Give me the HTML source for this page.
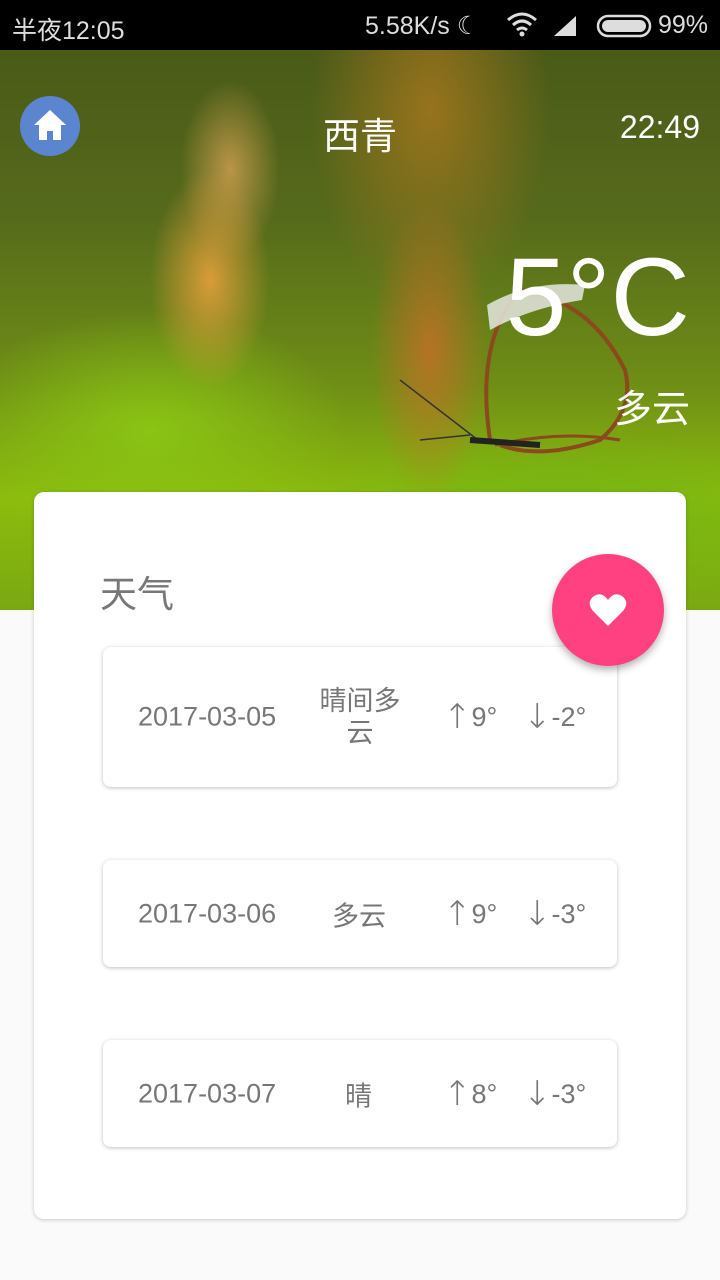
<!DOCTYPE html><html><head><meta charset="utf-8"><style>
*{margin:0;padding:0;box-sizing:border-box}
body{width:720px;height:1280px;background:#fafafa;position:relative;overflow:hidden;font-family:"Liberation Sans","Noto Sans CJK SC",sans-serif}
.sb{position:absolute;top:0;left:0;width:720px;height:50px;background:#000;color:#ddd;font-size:25px}
.bg{position:absolute;top:50px;left:0;width:720px;height:560px;overflow:hidden;
background:
radial-gradient(ellipse 60px 110px at 210px 230px,rgba(230,160,60,.9),rgba(200,130,40,0) 100%),
radial-gradient(ellipse 50px 90px at 230px 120px,rgba(230,170,90,.7),rgba(0,0,0,0)),
radial-gradient(ellipse 60px 150px at 430px 300px,rgba(200,110,40,.8),rgba(0,0,0,0)),
radial-gradient(ellipse 200px 120px at 150px 380px,rgba(140,200,20,.9),rgba(0,0,0,0)),
radial-gradient(ellipse 260px 90px at 560px 470px,rgba(110,180,20,.9),rgba(0,0,0,0)),
radial-gradient(ellipse 120px 200px at 430px 60px,rgba(170,120,30,.8),rgba(0,0,0,0)),
linear-gradient(180deg,#4a5a18 0%,#566a1c 30%,#6f8e16 60%,#8cbc0e 80%,#7aa812 100%);}
.card{position:absolute;left:34px;top:492px;width:652px;height:727px;background:#fff;border-radius:10px;box-shadow:0 1px 4px rgba(0,0,0,.2)}
.item{position:absolute;left:103px;width:514px;background:#fff;border-radius:8px;box-shadow:0 1px 4px rgba(0,0,0,.25);color:#777;font-size:27px}
.item span{position:absolute;top:50%;transform:translateY(-50%);white-space:nowrap}
.ar{font-size:34px;font-family:"DejaVu Sans",sans-serif;font-weight:200;vertical-align:-2px}
.fab{position:absolute;left:552px;top:554px;width:112px;height:112px;border-radius:50%;background:#ff4081;box-shadow:0 4px 8px rgba(0,0,0,.3)}
</style></head><body>
<div class="bg">
<svg width="720" height="560" style="position:absolute;left:0;top:0">
<g fill="none" stroke="#8a4a1c" stroke-width="4">
<path d="M490 390 Q475 290 520 240 Q590 250 625 320 Q635 360 600 390 Q540 410 500 395"/>
<path d="M495 395 Q560 380 620 390" stroke-width="3"/>
</g>
<path d="M487 255 Q530 230 585 235 L582 250 Q530 258 490 280Z" fill="#eee" opacity=".8"/>
<path d="M400 330 L478 390 M420 390 L470 385" stroke="#333" stroke-width="1.5"/>
<path d="M470 390 L540 395" stroke="#222" stroke-width="6"/>
</svg>
</div>
<div class="sb"><span style="position:absolute;left:12px;top:11px">半夜12:05</span>
<span style="position:absolute;left:365px;top:11px">5.58K/s ☾</span>
<svg style="position:absolute;left:506px;top:12px" width="150" height="26"><path d="M2 8 Q16 -4 30 8 M7 13 Q16 5 25 13 M11 18 Q16 14 21 18" stroke="#ddd" stroke-width="3" fill="none"/><circle cx="16" cy="22" r="2.5" fill="#ddd"/><path d="M48 24 L70 24 L70 4Z" fill="#ddd"/><rect x="92" y="4" width="52" height="20" rx="10" fill="none" stroke="#ddd" stroke-width="2.5"/><rect x="96" y="8" width="44" height="12" rx="6" fill="#ddd"/></svg>
<span style="position:absolute;left:658px;top:11px">99%</span></div>
<div style="position:absolute;left:20px;top:96px;width:60px;height:60px;border-radius:50%;background:#5c85cf"></div>
<svg style="position:absolute;left:20px;top:96px" width="60" height="60"><path d="M30 14 L14 29 L19 29 L19 44 L27 44 L27 35 L33 35 L33 44 L41 44 L41 29 L46 29Z" fill="#fff"/></svg>
<div style="position:absolute;left:0;width:720px;top:106px;text-align:center;color:#fff;font-size:37px">西青</div>
<div style="position:absolute;right:20px;top:109px;color:#fff;font-size:32px">22:49</div>
<div style="position:absolute;right:30px;top:238px;color:#fff;font-size:110px;line-height:120px">5°C</div>
<div style="position:absolute;right:30px;top:378px;color:#fff;font-size:38px">多云</div>
<div class="card"></div>
<div style="position:absolute;left:100px;top:564px;font-size:37px;color:#777">天气</div>
<div class="item" style="top:647px;height:140px"><span style="left:35px">2017-03-05</span><span style="left:212px;width:90px;text-align:center;line-height:32px;white-space:normal">晴间多云</span><span style="left:340px"><span class="ar" style="position:static;transform:none">↑</span>9°</span><span style="left:420px"><span class="ar" style="position:static;transform:none">↓</span>-2°</span></div>
<div class="item" style="top:860px;height:107px"><span style="left:35px">2017-03-06</span><span style="left:229px">多云</span><span style="left:340px"><span class="ar" style="position:static;transform:none">↑</span>9°</span><span style="left:420px"><span class="ar" style="position:static;transform:none">↓</span>-3°</span></div>
<div class="item" style="top:1040px;height:107px"><span style="left:35px">2017-03-07</span><span style="left:242px">晴</span><span style="left:340px"><span class="ar" style="position:static;transform:none">↑</span>8°</span><span style="left:420px"><span class="ar" style="position:static;transform:none">↓</span>-3°</span></div>
<div class="fab"></div>
<svg style="position:absolute;left:588px;top:592px" width="40" height="36"><path d="M20 34 L5 19 Q-2 10 6 4 Q14 -1 20 8 Q26 -1 34 4 Q42 10 35 19Z" fill="#fff"/></svg>
</body></html>
